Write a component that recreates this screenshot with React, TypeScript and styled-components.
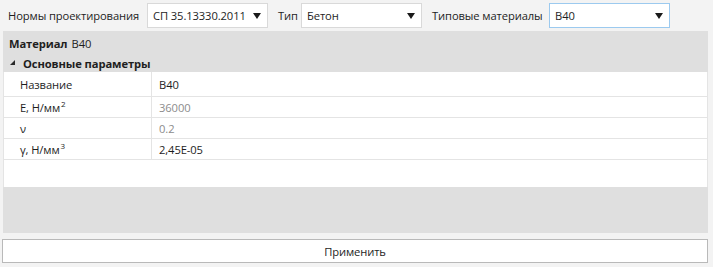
import React from "react";
import styled, { createGlobalStyle } from "styled-components";

const Global = createGlobalStyle`
  html, body { margin: 0; padding: 0; }
  body {
    background: #f3f3f3;
    font-family: "Open Sans", "Noto Sans", sans-serif;
    font-size: 11.2px;
    color: #1e1e1e;
    width: 713px;
    height: 267px;
    overflow: hidden;
  }
`;

const Page = styled.div`
  display: flex;
  flex-direction: column;
  width: 713px;
`;

const Toolbar = styled.div`
  display: flex;
  align-items: center;
  height: 31px;
  padding-left: 8px;
`;

const Label = styled.span<{ $width: number }>`
  width: ${(p) => p.$width}px;
  flex: none;
  white-space: nowrap;
  letter-spacing: -0.1px;
`;

const Combo = styled.div<{ $focused?: boolean; $after: number }>`
  display: flex;
  align-items: center;
  justify-content: space-between;
  box-sizing: border-box;
  flex: none;
  width: 121px;
  height: 25px;
  padding: 0 6px 0 5px;
  margin-right: ${(p) => p.$after}px;
  background: #ffffff;
  border: 1px solid ${(p) => (p.$focused ? "#9ccaef" : "#d9d9d9")};
  white-space: nowrap;
  letter-spacing: -0.1px;
`;

const Arrow = styled.span`
  flex: none;
  width: 0;
  height: 0;
  border-left: 4px solid transparent;
  border-right: 4px solid transparent;
  border-top: 6px solid #1a1a1a;
`;

const Panel = styled.div`
  display: flex;
  flex-direction: column;
  margin-left: 3px;
  width: 705px;
  height: 202px;
  background: #dfdfdf;
`;

const PanelHeader = styled.div`
  display: flex;
  align-items: center;
  height: 24px;
  padding-left: 6px;
  gap: 4px;
`;

const Bold = styled.span`
  font-weight: 700;
  letter-spacing: -0.1px;
`;

const Section = styled.div`
  display: flex;
  align-items: center;
  height: 17px;
  padding-left: 7px;
  gap: 8px;
`;

const Expander = styled.span`
  width: 0;
  height: 0;
  border-left: 5px solid transparent;
  border-bottom: 5px solid #2a2a2a;
  margin-top: -2px;
`;

const Grid = styled.div`
  display: flex;
  flex-direction: column;
  background: #ffffff;
  border-left: 1px solid #e4e4e4;
  border-right: 1px solid #e4e4e4;
  height: 115px;
`;

const Row = styled.div<{ $h: number }>`
  display: grid;
  grid-template-columns: 148px 1fr;
  height: ${(p) => p.$h}px;
  border-bottom: 1px solid #e4e4e4;
`;

const NameCell = styled.div`
  display: flex;
  align-items: center;
  padding-left: 16px;
  border-right: 1px solid #e4e4e4;
  letter-spacing: -0.1px;
`;

const ValueCell = styled.div<{ $readonly?: boolean }>`
  display: flex;
  align-items: center;
  padding-left: 7px;
  color: ${(p) => (p.$readonly ? "#8c8c8c" : "#1e1e1e")};
  letter-spacing: -0.1px;
`;

const Sup = styled.span`
  font-size: 8px;
  position: relative;
  top: -4px;
  margin-left: 1px;
`;

const ApplyButton = styled.button`
  margin: 6px 0 0 2px;
  width: 706px;
  height: 24px;
  box-sizing: border-box;
  background: #ffffff;
  border: 1px solid #b9b9b9;
  font-family: inherit;
  font-size: 11.2px;
  color: #1e1e1e;
  padding: 0;
  letter-spacing: -0.1px;
`;

type Param = { name: React.ReactNode; value: string; readonly?: boolean; h: number };

const params: Param[] = [
  { name: "Название", value: "B40", h: 24 },
  { name: <>E, Н/мм<Sup>2</Sup></>, value: "36000", readonly: true, h: 20 },
  { name: "ν", value: "0.2", readonly: true, h: 20 },
  { name: <>γ, Н/мм<Sup>3</Sup></>, value: "2,45E-05", h: 20 },
];

export default function App() {
  return (
    <Page>
      <Global />
      <Toolbar>
        <Label $width={139}>Нормы проектирования</Label>
        <Combo $after={10}>
          <span>СП 35.13330.2011</span>
          <Arrow />
        </Combo>
        <Label $width={23}>Тип</Label>
        <Combo $after={10}>
          <span>Бетон</span>
          <Arrow />
        </Combo>
        <Label $width={117}>Типовые материалы</Label>
        <Combo $focused $after={0}>
          <span>B40</span>
          <Arrow />
        </Combo>
      </Toolbar>
      <Panel>
        <PanelHeader>
          <Bold>Материал</Bold>
          <span>B40</span>
        </PanelHeader>
        <Section>
          <Expander />
          <Bold>Основные параметры</Bold>
        </Section>
        <Grid>
          {params.map((p, i) => (
            <Row key={i} $h={p.h}>
              <NameCell>{p.name}</NameCell>
              <ValueCell $readonly={p.readonly}>{p.value}</ValueCell>
            </Row>
          ))}
        </Grid>
      </Panel>
      <ApplyButton>Применить</ApplyButton>
    </Page>
  );
}
